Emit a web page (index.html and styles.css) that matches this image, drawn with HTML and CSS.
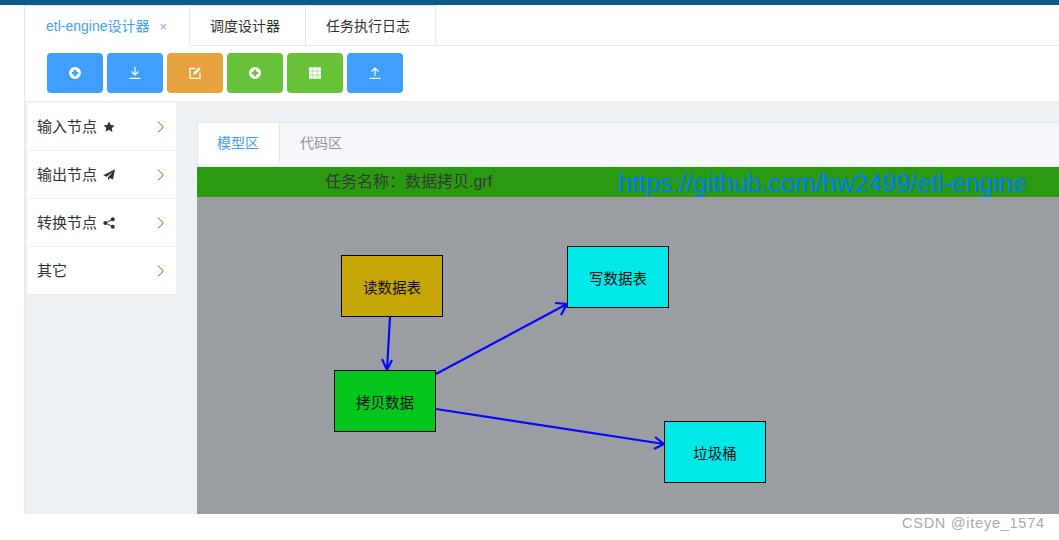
FILE: index.html
```html
<!DOCTYPE html>
<html lang="zh">
<head>
<meta charset="utf-8">
<title>etl-engine设计器</title>
<link rel="stylesheet" href="styles.css">
</head>
<body>
<div class="topbar"></div>
<div class="app">
  <div class="gutter"></div>
  <main class="main">
    <nav class="tabs">
      <div class="tab tab-active">etl-engine设计器<span class="tab-close">×</span></div>
      <div class="tab tab-two">调度设计器</div>
      <div class="tab tab-three">任务执行日志</div>
    </nav>
    <div class="toolbar">
      <button class="btn blue"><svg class="ic" viewBox="0 0 12 12"><path fill="#fff" fill-rule="evenodd" d="M6 0a6 6 0 1 1 0 12A6 6 0 0 1 6 0zM4.800 2.800v2H2.800v2.400h2v2h2.400v-2h2V4.800h-2v-2z"/></svg></button>
      <button class="btn blue"><svg class="ic ic-line" viewBox="0 0 12 12"><path fill="none" stroke="#fff" stroke-width="1.200" d="M6 0v8M2.500 4.500 6 8l3.500-3.500M.5 11.400h11"/></svg></button>
      <button class="btn orange"><svg class="ic" viewBox="0 0 12 12"><path fill="none" stroke="#fff" stroke-width="1.300" d="M6.500 1.500h-5.500v9.800h10V5.500"/><path fill="#fff" d="M10 .3 11.800 2.100 6.500 7.400l-2.200.4.400-2.200z"/></svg></button>
      <button class="btn green"><svg class="ic" viewBox="0 0 12 12"><path fill="#fff" fill-rule="evenodd" d="M6 0a6 6 0 1 1 0 12A6 6 0 0 1 6 0zM4.800 2.800v2H2.800v2.400h2v2h2.400v-2h2V4.800h-2v-2z"/></svg></button>
      <button class="btn green"><svg class="ic" viewBox="0 0 12 12"><path fill="#fff" d="M0 .3h3.700v3.500H0zM4.150 .3h3.700v3.500h-3.700zM8.300 .3H12v3.500H8.300zM0 4.250h3.700v3.500H0zM4.150 4.250h3.700v3.500h-3.700zM8.300 4.250H12v3.500H8.300zM0 8.200h3.700v3.500H0zM4.150 8.200h3.700v3.500h-3.700zM8.300 8.200H12v3.500H8.300z"/></svg></button>
      <button class="btn blue"><svg class="ic ic-line" viewBox="0 0 12 12"><path fill="none" stroke="#fff" stroke-width="1.200" d="M6 9V1M2.500 4.500 6 1l3.500 3.500M.5 11.400h11"/></svg></button>
    </div>
    <div class="workspace">
      <aside class="sidebar">
        <div class="menu-item"><span class="menu-label">输入节点</span>
          <svg class="menu-icon" viewBox="0 0 12 12"><path fill="#303133" d="M6 .5l1.700 3.600 3.900.5-2.900 2.700.8 3.900L6 8.800l-3.500 1.900.8-3.900L.4 4.600l3.900-.5z"/></svg>
          <svg class="chev" viewBox="0 0 8 12"><path fill="none" stroke="#7a5f1e" d="M1 .7 6.500 6 1 11.300"/></svg></div>
        <div class="menu-item"><span class="menu-label">输出节点</span>
          <svg class="menu-icon" viewBox="0 0 12 12"><path fill="#303133" d="M12 .3 10 10.500 6.800 9.100 5 11.200V8.500L10 2.500 3.700 7.700.2 6.300z"/></svg>
          <svg class="chev" viewBox="0 0 8 12"><path fill="none" stroke="#7a5f1e" d="M1 .7 6.500 6 1 11.300"/></svg></div>
        <div class="menu-item"><span class="menu-label">转换节点</span>
          <svg class="menu-icon" viewBox="0 0 12 12"><circle cx="2.300" cy="6" r="2" fill="#303133"/><circle cx="9.800" cy="2.300" r="2" fill="#303133"/><circle cx="9.800" cy="9.700" r="2" fill="#303133"/><path stroke="#303133" d="M2.300 6l7.500-3.700M2.300 6l7.500 3.700"/></svg>
          <svg class="chev" viewBox="0 0 8 12"><path fill="none" stroke="#7a5f1e" d="M1 .7 6.500 6 1 11.300"/></svg></div>
        <div class="menu-item"><span class="menu-label">其它</span>
          <svg class="chev" viewBox="0 0 8 12"><path fill="none" stroke="#7a5f1e" d="M1 .7 6.500 6 1 11.300"/></svg></div>
      </aside>
      <section class="panel">
        <div class="panel-tabs">
          <div class="ptab ptab-active">模型区</div>
          <div class="ptab">代码区</div>
        </div>
        <div class="taskbar">
          <span class="task-name">任务名称：数据拷贝.grf</span>
          <span class="task-link">https://github.com/hw2499/etl-engine</span>
        </div>
        <div class="canvas">
          <svg class="edges" viewBox="0 0 862 317" width="862" height="317">
            <g fill="none" stroke="#0808f8" stroke-width="2.200">
              <path d="M193 120 190 173M185 162 190 173 195 163"/>
              <path d="M239 177 370 107M358 106 370 107 364 118"/>
              <path d="M239 212 467 247M458 240 467 247 457 252"/>
            </g>
          </svg>
          <div class="node gold n1">读数据表</div>
          <div class="node cyan n2">写数据表</div>
          <div class="node lime n3">拷贝数据</div>
          <div class="node cyan n4">垃圾桶</div>
        </div>
      </section>
    </div>
  </main>
</div>
<div class="watermark">CSDN @iteye_1574</div>
</body>
</html>
```
FILE: styles.css
```css
* { box-sizing: border-box; }
html, body { margin: 0; height: 540px; overflow: hidden; background: #fff; }
body { font-family: "Liberation Sans", "Noto Sans CJK SC", sans-serif; font-size: 14px; color: #303133; position: relative; }
.topbar { height: 5px; background: #0b5a8c; }
.app { display: flex; height: 509px; }
.gutter { width: 25px; flex: none; border-right: 1px solid #e6e6ee; }
.main { flex: 1; min-width: 0; display: flex; flex-direction: column; }
.tabs { display: flex; height: 41px; border-bottom: 1px solid #e4e7ed; flex: none; }
.tab { height: 41px; line-height: 41px; padding: 0 20px; border-right: 1px solid #e4e7ed; border-top: 1px solid #e4e7ed; font-size: 14px; white-space: nowrap; }
.tab-active { color: #409eff; width: 165px; padding-left: 21px; border-bottom: 1px solid #fff; }
.tab-close { color: #7aa9e0; margin-left: 10px; font-size: 13px; }
.tab-two { width: 116px; }
.tab-three { width: 130px; }
.toolbar { height: 55px; flex: none; display: flex; gap: 4px; padding: 7px 0 0 22px; }
.btn { width: 56px; height: 40px; border: 0; border-radius: 4px; padding: 0; display: flex; align-items: center; justify-content: center; }
.blue { background: #409eff; }
.orange { background: #e6a23c; }
.green { background: #67c23a; }
.ic { width: 12px; height: 12px; }
.workspace { flex: 1; min-height: 0; display: flex; background: #edf0f5; padding: 2px 0 0 2px; }
.sidebar { width: 149px; flex: none; align-self: flex-start; }
.menu-item { height: 48px; background: #fff; border-bottom: 1px solid #eeeef3; display: flex; align-items: center; padding: 1px 0 0 10px; }
.menu-label { font-size: 15px; line-height: 20px; }
.menu-icon { width: 12px; height: 12px; margin-left: 6px; }
.chev { width: 8px; height: 12px; margin-left: auto; margin-right: 11px; }
.panel { flex: 1; min-width: 0; margin: 19px 0 0 21px; display: flex; flex-direction: column; background: #f5f7fa; }
.panel-tabs { height: 45px; flex: none; display: flex; border-top: 1px solid #e4e7ed; border-left: 1px solid #e4e7ed; background: #f5f7fa; padding-bottom: 1px; }
.ptab { height: 39px; line-height: 41px; padding: 0 20px; color: #909399; font-size: 14px; }
.ptab-active { width: 82px; height: 40px; padding: 0 19px; color: #409eff; background: #fff; border-right: 1px solid #e4e7ed; }
.taskbar { height: 30px; flex: none; background: #2b9a10; position: relative; display: flex; align-items: center; padding-left: 128px; white-space: nowrap; }
.task-name { width: 293px; font-size: 16px; line-height: 28px; color: #2f3a36; }
.task-link { font-family: "Liberation Sans", sans-serif; font-size: 25px; color: #007bff; line-height: 32px; padding-top: 2px; }
.canvas { flex: 1; min-height: 0; position: relative; background: #9a9da2; overflow: hidden; }
.edges { position: absolute; left: 0; top: 0; }
.node { position: absolute; width: 102px; height: 62px; border: 1px solid #000; display: flex; align-items: center; justify-content: center; font-size: 14.500px; color: #111; }
.gold { background: #c7a706; }
.cyan { background: #00e9e9; }
.lime { background: #04c51c; }
.n1 { left: 144px; top: 58px; }
.n2 { left: 370px; top: 49px; }
.n3 { left: 137px; top: 173px; }
.n4 { left: 467px; top: 224px; }
.watermark { position: absolute; left: 902px; top: 514px; font-family: "Liberation Sans", sans-serif; font-size: 14.500px; letter-spacing: .75px; color: #a9a9a9; line-height: 18px; }
```
